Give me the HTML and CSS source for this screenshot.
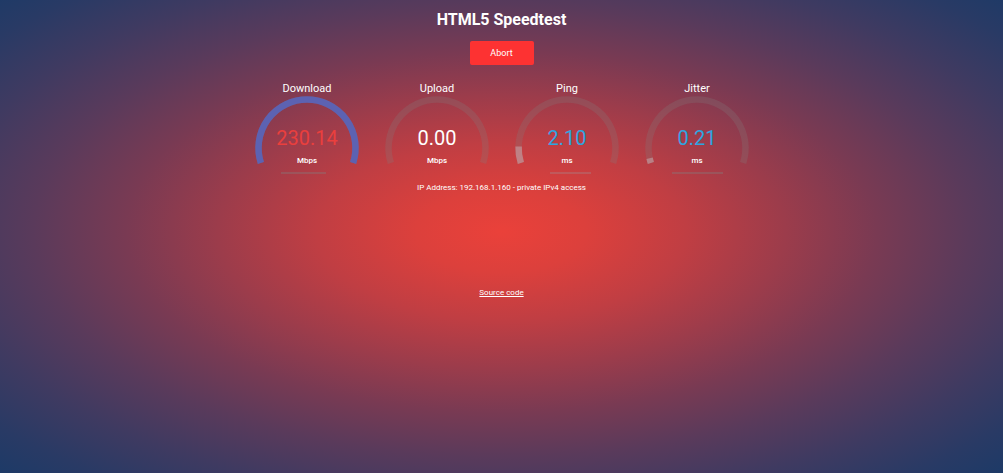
FILE: index.html
```html
<!DOCTYPE html>
<html>
<head>
<meta charset="utf-8">
<title>HTML5 Speedtest</title>
<link rel="stylesheet" href="styles.css">
</head>
<body>
<main class="page">
  <h1 class="title">HTML5 Speedtest</h1>
  <button class="abort">Abort</button>
  <section class="meters">
    <div class="meter">
      <div class="meter-label">Download</div>
      <svg class="gauge" width="130" height="82" viewBox="0 0 130 82">
        <path class="track" d="M18.87 66.99 A48.5 48.5 0 1 1 111.13 66.99"/>
        <path class="fill-dl" d="M18.87 66.99 A48.5 48.5 0 1 1 111.13 66.99"/>
        <rect class="prog" x="39" y="76" width="45" height="2"/>
        <text class="val val-red" x="65" y="49">230.14</text>
        <text class="unit" x="65" y="67">Mbps</text>
      </svg>
    </div>
    <div class="meter">
      <div class="meter-label">Upload</div>
      <svg class="gauge" width="130" height="82" viewBox="0 0 130 82">
        <path class="track" d="M18.87 66.99 A48.5 48.5 0 1 1 111.13 66.99"/>
        <text class="val val-white" x="65" y="49">0.00</text>
        <text class="unit" x="65" y="67">Mbps</text>
      </svg>
    </div>
    <div class="meter">
      <div class="meter-label">Ping</div>
      <svg class="gauge" width="130" height="82" viewBox="0 0 130 82">
        <path class="track" d="M18.87 66.99 A48.5 48.5 0 1 1 111.13 66.99"/>
        <path class="fill-small" d="M18.87 66.99 A48.5 48.5 0 0 1 16.6 50.5"/>
        <rect class="prog prog-faint" x="48" y="76" width="41" height="2"/>
        <text class="val val-blue" x="65" y="49">2.10</text>
        <text class="unit" x="65" y="67">ms</text>
      </svg>
    </div>
    <div class="meter">
      <div class="meter-label">Jitter</div>
      <svg class="gauge" width="130" height="82" viewBox="0 0 130 82">
        <path class="track" d="M18.87 66.99 A48.5 48.5 0 1 1 111.13 66.99"/>
        <path class="fill-small" d="M18.87 66.99 A48.5 48.5 0 0 1 17.6 62.3"/>
        <rect class="prog" x="40" y="76" width="51" height="2"/>
        <text class="val val-blue" x="65" y="49">0.21</text>
        <text class="unit" x="65" y="67">ms</text>
      </svg>
    </div>
  </section>
  <p class="ip">IP Address: 192.168.1.160 - private IPv4 access</p>
  <a class="source" href="#">Source code</a>
</main>
</body>
</html>
```
FILE: styles.css
```css
html, body {
  margin: 0;
  padding: 0;
  height: 100%;
}
body {
  font-family: Roboto, "Liberation Sans", sans-serif;
  color: #fff;
  background: radial-gradient(ellipse farthest-corner at 50% 49%,
    #ea413a 0%,
    #dc403c 12%,
    #c03e43 26%,
    #9c3c4b 40%,
    #793a53 53%,
    #5a3a5b 66%,
    #3f3a61 79%,
    #293a65 91%,
    #1d3a67 100%);
  overflow: hidden;
}
.page {
  display: flex;
  flex-direction: column;
  align-items: center;
}
.title {
  margin: 9px 0 0;
  font-size: 16px;
  line-height: 22px;
  font-weight: 700;
}
.abort {
  margin-top: 10px;
  width: 64px;
  height: 24px;
  border: none;
  border-radius: 2px;
  background: #fd3232;
  color: #fff;
  font-family: Roboto, "Liberation Sans", sans-serif;
  font-size: 9px;
  padding: 0;
}
.meters {
  margin-top: 17px;
  display: flex;
  margin-left: 1px;
}
.meter {
  width: 130px;
  display: flex;
  flex-direction: column;
  align-items: center;
}
.meter-label {
  font-size: 11px;
  line-height: 14px;
  height: 14px;
}
.gauge {
  display: block;
}
.track {
  fill: none;
  stroke: rgba(128, 128, 128, 0.25);
  stroke-width: 6.5;
}
.fill-dl {
  fill: none;
  stroke: #5c62b2;
  stroke-width: 6.5;
}
.fill-small {
  fill: none;
  stroke: rgba(205, 190, 195, 0.45);
  stroke-width: 6.5;
}
.prog {
  fill: rgba(128, 128, 128, 0.35);
}
.prog-faint {
  fill: rgba(160, 150, 155, 0.3);
}
.val {
  font-family: Roboto, "Liberation Sans", sans-serif;
  font-size: 20px;
  text-anchor: middle;
}
.val-red { fill: #ea3f3d; }
.val-white { fill: #ffffff; }
.val-blue { fill: #2ea5e0; }
.unit {
  font-family: Roboto, "Liberation Sans", sans-serif;
  font-size: 8px;
  font-weight: 500;
  text-anchor: middle;
  fill: #fff;
}
.ip {
  margin: 5px 0 0;
  font-size: 8px;
  line-height: 10px;
}
.source {
  margin-top: 95px;
  font-size: 8px;
  line-height: 10px;
  color: #fff;
  text-decoration: underline;
}
```
